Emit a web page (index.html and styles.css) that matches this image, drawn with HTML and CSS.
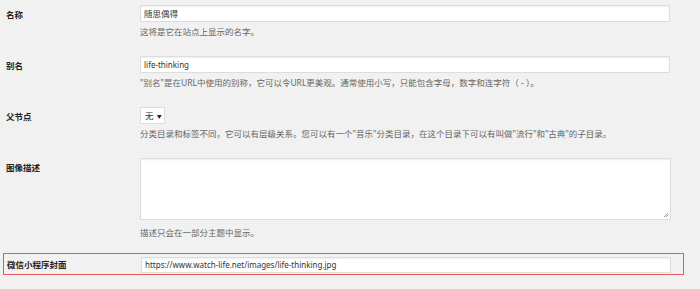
FILE: index.html
```html
<!DOCTYPE html>
<html lang="zh-CN">
<head>
<meta charset="utf-8">
<link rel="stylesheet" href="styles.css">
</head>
<body>
<div class="form">
  <div class="row">
    <div class="label">名称</div>
    <div class="field">
      <div class="input input-cjk">随思偶得</div>
      <p class="desc">这将是它在站点上显示的名字。</p>
    </div>
  </div>
  <div class="row">
    <div class="label">别名</div>
    <div class="field">
      <div class="input">life-thinking</div>
      <p class="desc">"别名"是在URL中使用的别称，它可以令URL更美观。通常使用小写，只能包含字母，数字和连字符（ - ）。</p>
    </div>
  </div>
  <div class="row">
    <div class="label">父节点</div>
    <div class="field">
      <div class="select">无 <span class="arrow">▼</span></div>
      <p class="desc">分类目录和标签不同，它可以有层级关系。您可以有一个"音乐"分类目录，在这个目录下可以有叫做"流行"和"古典"的子目录。</p>
    </div>
  </div>
  <div class="row row-ta">
    <div class="label">图像描述</div>
    <div class="field">
      <div class="textarea">
        <svg class="grip" width="6" height="6" viewBox="0 0 6 6"><path d="M5 1L1 5M5 3L3 5" stroke="#999" stroke-width="1" fill="none"/></svg>
      </div>
      <p class="desc desc-ta">描述只会在一部分主题中显示。</p>
    </div>
  </div>
  <div class="row row-hl">
    <div class="label">微信小程序封面</div>
    <div class="field">
      <div class="input input-sm">https://www.watch-life.net/images/life-thinking.jpg</div>
    </div>
  </div>
</div>
</body>
</html>
```

FILE: styles.css
```css
html, body {
  margin: 0;
  padding: 0;
  background: #f1f1f1;
}
body {
  width: 700px;
  height: 289px;
  overflow: hidden;
  font-family: "Noto Sans", "Noto Sans CJK SC", sans-serif;
  font-size: 8.5px;
  color: #444;
}
.form {
  padding-top: 5px;
}
.row {
  display: grid;
  grid-template-columns: 134px 530px;
  padding-left: 6px;
  height: 51px;
}
.label {
  font-weight: bold;
  color: #222;
  line-height: 12px;
  padding-top: 4px;
}
.field {
  display: flex;
  flex-direction: column;
  align-items: flex-start;
}
.input {
  box-sizing: border-box;
  width: 530px;
  height: 17px;
  background: #fff;
  border: 1px solid #ddd;
  box-shadow: inset 0 1px 2px rgba(0,0,0,0.07);
  padding: 0 3px;
  line-height: 15px;
  color: #333;
  font-size: 8px;
}
.input-cjk {
  font-size: 8.5px;
}
.desc {
  margin: 3px 0 0;
  line-height: 13px;
  color: #666;
}
.select {
  box-sizing: border-box;
  width: 25px;
  height: 17px;
  background: #fff;
  border: 1px solid #ddd;
  line-height: 15px;
  padding-left: 4px;
  color: #333;
}
.arrow {
  font-size: 5px;
  vertical-align: 1px;
  color: #222;
  margin-left: 1px;
}
.row-ta {
  height: 95px;
}
.textarea {
  box-sizing: border-box;
  width: 531px;
  height: 62px;
  background: #fff;
  border: 1px solid #ddd;
  box-shadow: inset 0 1px 2px rgba(0,0,0,0.07);
  position: relative;
}
.grip {
  position: absolute;
  right: 1px;
  bottom: 1px;
}
.desc-ta {
  margin-top: 6px;
}
.row-hl {
  margin-left: 3px;
  width: 681px;
  box-sizing: border-box;
  height: 22px;
  border: 1px solid #e8585a;
  padding: 3px 0 2px 3px;
}
.row-hl .label {
  padding-top: 2px;
}
.input-sm {
  height: 16px;
  line-height: 14px;
}
```
